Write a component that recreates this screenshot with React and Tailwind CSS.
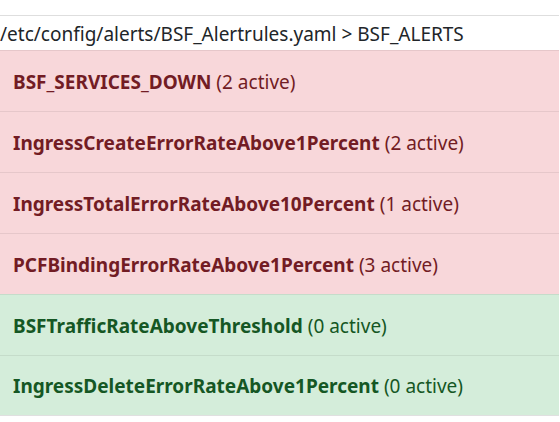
import React from 'react';

const alerts = [
  { name: 'BSF_SERVICES_DOWN', active: 2 },
  { name: 'IngressCreateErrorRateAbove1Percent', active: 2 },
  { name: 'IngressTotalErrorRateAbove10Percent', active: 1 },
  { name: 'PCFBindingErrorRateAbove1Percent', active: 3 },
  { name: 'BSFTrafficRateAboveThreshold', active: 0 },
  { name: 'IngressDeleteErrorRateAbove1Percent', active: 0 },
];

const App = () => {
  return (
    <div className="min-h-[422px] bg-white pt-[15px] font-['Noto_Sans','Open_Sans',sans-serif]">
      <div className="w-[559px]">
        {/* Breadcrumb header */}
        <div className="h-[35px] border-t border-[#dedede] flex items-center pt-[2px] text-[19px] text-[#212529] leading-none">
          /etc/config/alerts/BSF_Alertrules.yaml &gt; BSF_ALERTS
        </div>

        {/* Alert rule list */}
        <ul>
          {alerts.map((a, i) => (
            <li
              key={i}
              className={`h-[61px] border-t border-[rgba(0,0,0,0.07)] flex items-center pl-[13px] pt-[2px] text-[19px] ${
                a.active > 0 ? 'bg-[#f8d7da] text-[#721c24]' : 'bg-[#d4edda] text-[#155724]'
              } ${i === alerts.length - 1 ? 'border-b border-b-[#e0e0e0]' : ''}`}
            >
              <span className="font-bold">{a.name}</span>
              <span className="ml-[5px]">({a.active} active)</span>
            </li>
          ))}
        </ul>
      </div>
    </div>
  );
};

export default App;
